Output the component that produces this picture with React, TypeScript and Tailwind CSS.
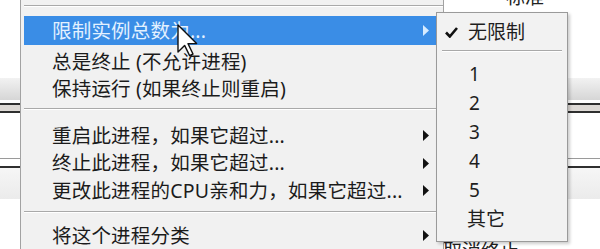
import React from "react";

const font = { fontFamily: '"Noto Sans", "Noto Sans CJK SC", sans-serif' };

function Arrow({ light }: { light?: boolean }) {
  return (
    <svg width="6" height="11" viewBox="0 0 6 11" className="shrink-0">
      <path d="M0 0 L6 5.5 L0 11 Z" fill={light ? "#d6ebff" : "#111"} />
    </svg>
  );
}

function Separator({ className }: { className: string }) {
  return <div className={`border-t border-b border-t-[#a9a9a9] border-b-white ${className}`} />;
}

type Item = { label: string; sub?: boolean; h: string; mt: string; active?: boolean };

const sectionA: Item[] = [
  { label: "限制实例总数为...", sub: true, h: "h-[29px]", mt: "mt-[9px]", active: true },
  { label: "总是终止 (不允许进程)", h: "h-[27px]", mt: "mt-[3px]" },
  { label: "保持运行 (如果终止则重启)", h: "h-[27px]", mt: "mt-0" },
];

const sectionB: Item[] = [
  { label: "重启此进程，如果它超过...", sub: true, h: "h-[27px]", mt: "mt-[12px]" },
  { label: "终止此进程，如果它超过...", sub: true, h: "h-[28px]", mt: "mt-0" },
  { label: "更改此进程的CPU亲和力，如果它超过...", sub: true, h: "h-[27px]", mt: "mt-0" },
];

function MenuRow({ item }: { item: Item }) {
  return (
    <div
      className={`${item.h} ${item.mt} ml-[3px] mr-[7px] pl-[28px] pr-[7px] flex items-center justify-between text-[19.5px] leading-none ${
        item.active ? "bg-[#3a8de6] text-[#e3f1ff]" : "text-[#1b1b1b]"
      }`}
    >
      <span className="whitespace-nowrap tracking-[0.2px]">{item.label}</span>
      {item.sub && <Arrow light={item.active} />}
    </div>
  );
}

function SubRow({ label, mt }: { label: string; mt?: string }) {
  return (
    <div className={`h-[29px] ${mt ?? ""} pl-[32px] flex items-center text-[19px] leading-none text-[#1e1e1e]`}>
      {label}
    </div>
  );
}

export default function App() {
  return (
    <div className="relative w-[600px] h-[249px] overflow-hidden bg-white" style={font}>
      {/* background list */}
      <div className="flex flex-col">
        <div className="h-[78px] pl-[506px]">
          <span className="block -mt-[15px] text-[19px] leading-[24px] text-[#222]">标准</span>
        </div>
        <div className="h-[22px] bg-gradient-to-b from-[#f2f2f2] to-[#d6d6d6]" />
        <div className="h-[3px]" />
        <div className="h-[2px] bg-[#2f2f2f]" />
        <div className="h-[6px] bg-[#dedad6]" />
        <div className="h-[2px] bg-[#2f2f2f]" />
        <div className="h-[45px]" />
        <div className="h-[1px] bg-[#9a9a9a]" />
        <div className="h-[7px]" />
        <div className="h-[2px] bg-[#2f2f2f]" />
        <div className="h-[31px] bg-gradient-to-b from-[#f6f6f6] to-[#ebebeb]" />
        <div className="h-[41px]" />
        <div className="pl-[443px] text-[19px] leading-[24px] text-[#222] -mt-[1px]">取消终止</div>
      </div>

      {/* main context menu */}
      <div className="absolute left-[20px] top-0 w-[424px] h-[260px] bg-[#f1f1f1] border-l border-r border-[#a2a2a2] flex flex-col">
        <Separator className="mt-[5px] ml-[3px] mr-0" />
        {sectionA.map((it) => (
          <MenuRow key={it.label} item={it} />
        ))}
        <Separator className="mt-[6px] ml-[3px] mr-[7px]" />
        {sectionB.map((it) => (
          <MenuRow key={it.label} item={it} />
        ))}
        <Separator className="mt-[7px] ml-[3px] mr-[7px]" />
        <MenuRow item={{ label: "将这个进程分类", sub: true, h: "h-[27px]", mt: "mt-[9px]" }} />
      </div>

      {/* submenu */}
      <div className="absolute left-[436px] top-[12px] w-[132px] h-[230px] bg-[#f2f2f2] border border-[#9a9a9a] shadow-[2px_2px_3px_rgba(0,0,0,0.2)] flex flex-col">
        <div className="h-[28px] mt-[5px] pl-[8px] flex items-center gap-[10px] text-[19px] leading-none text-[#1e1e1e]">
          <svg width="13" height="11" viewBox="0 0 13 11">
            <path d="M1 5.5 L4.8 9.5 L12 1" fill="none" stroke="#111" strokeWidth="2.6" />
          </svg>
          <span>无限制</span>
        </div>
        <Separator className="mt-[4px] mx-[5px]" />
        <SubRow label="1" mt="mt-[8px]" />
        <SubRow label="2" />
        <SubRow label="3" />
        <SubRow label="4" />
        <SubRow label="5" />
        <div className="h-[29px] pl-[30px] flex items-center text-[19px] leading-none text-[#1e1e1e]">其它</div>
      </div>

      {/* mouse pointer */}
      <svg className="absolute left-[177px] top-[24px]" width="22" height="34" viewBox="0 0 22 34">
        <path
          d="M1 1 L1 28 L7.6 21.4 L12.6 31.6 L16 30 L11 19.6 L19.6 19.6 Z"
          fill="#fff"
          stroke="#111"
          strokeWidth="1.4"
          strokeLinejoin="round"
        />
      </svg>
    </div>
  );
}
